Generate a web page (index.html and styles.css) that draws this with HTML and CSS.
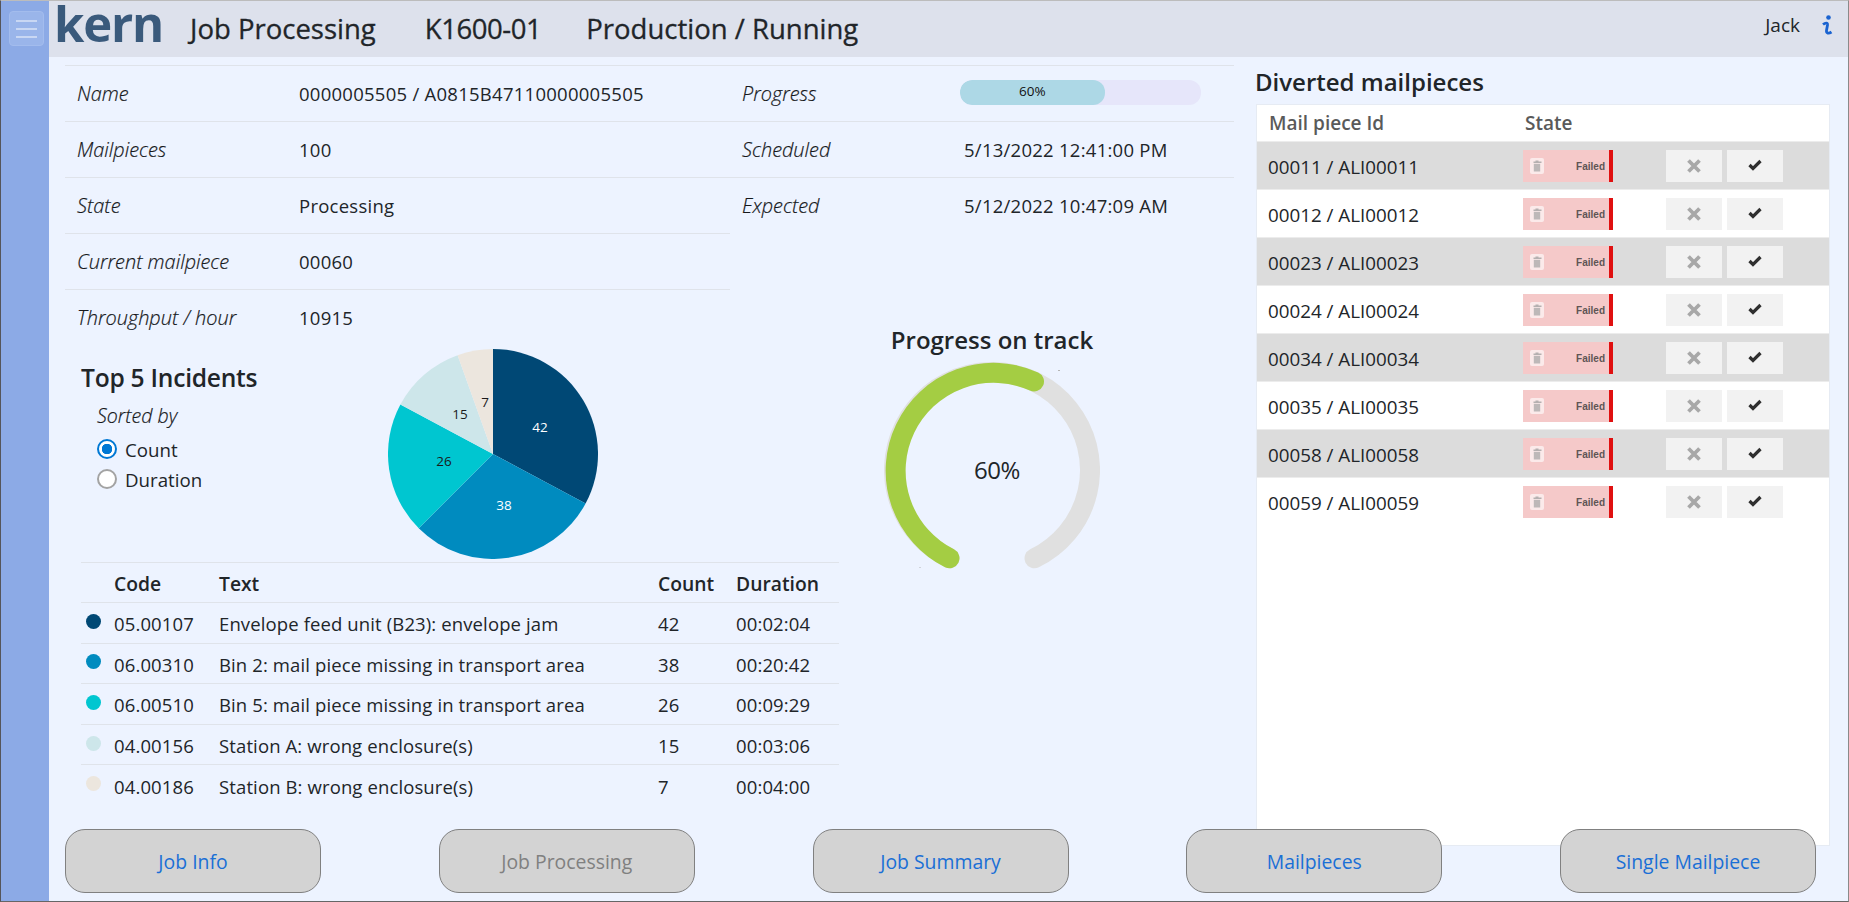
FILE: index.html
```html
<!DOCTYPE html>
<html lang="en">
<head>
<meta charset="utf-8">
<title>Job Processing</title>
<link rel="stylesheet" href="styles.css">
</head>
<body>
<svg class="defs" width="0" height="0" aria-hidden="true">
  <symbol id="trash" viewBox="0 0 14 16">
    <rect width="14" height="16" rx="2" fill="#fbeaea"/>
    <path d="M5.5 2.5h3v1h3v1.4h-8V3.500h2z" fill="#b5b0b0"/>
    <path d="M3.800 5.800h6.400v7.700H3.800z" fill="#bdb8b8"/>
  </symbol>
  <symbol id="cross" viewBox="0 0 14 14">
    <path d="M1.500 1.500l11 11M12.500 1.500l-11 11" stroke="#a8a8a8" stroke-width="3.800" fill="none"/>
  </symbol>
  <symbol id="check" viewBox="0 0 14 12">
    <path d="M1.500 6l3.500 3.500L12.500 2" stroke="#2f2f2f" stroke-width="3.200" fill="none"/>
  </symbol>
</svg>
<div class="app">
  <aside class="side">
    <button class="burger" type="button" aria-label="Menu"><i></i><i></i><i></i></button>
  </aside>
  <div class="main">
    <header class="top">
      <span class="logo">kern</span>
      <h1 class="crumbs"><span>Job Processing</span><span class="crumb-id">K1600-01</span><span>Production / Running</span></h1>
      <div class="user">
        <span class="user-name">Jack</span>
        <svg class="info" width="11" height="21" viewBox="0 0 11 21"><circle cx="6.500" cy="2.500" r="2.300" fill="#1a63d0"/><path d="M1 9.500C3.500 7.500 5.800 7.500 5.500 10L4.500 15.500C4.200 18.500 6.500 19 9.500 17" fill="none" stroke="#1a63d0" stroke-width="2.800"/></svg>
      </div>
    </header>
    <div class="content">
      <section class="board">
        <div class="facts facts-a">
          <div class="fact"><span class="key">Name</span><span class="val">0000005505 / A0815B47110000005505</span></div>
          <div class="fact"><span class="key">Mailpieces</span><span class="val">100</span></div>
          <div class="fact"><span class="key">State</span><span class="val">Processing</span></div>
          <div class="fact"><span class="key">Current mailpiece</span><span class="val">00060</span></div>
          <div class="fact"><span class="key">Throughput / hour</span><span class="val">10915</span></div>
        </div>
        <div class="facts facts-b">
          <div class="fact"><span class="key">Progress</span><div class="bar"><div class="bar-fill" style="width:60%">60%</div></div></div>
          <div class="fact"><span class="key">Scheduled</span><span class="val">5/13/2022 12:41:00 PM</span></div>
          <div class="fact"><span class="key">Expected</span><span class="val">5/12/2022 10:47:09 AM</span></div>
        </div>
        <div class="gauge">
          <h2 class="gauge-title">Progress on track</h2>
          <svg class="gauge-svg" width="216" height="216" viewBox="0 0 216 216">
            <path d="M65.500 196.300A98 98 0 1 1 150.500 196.300" fill="none" stroke="#e0e0e0" stroke-width="20" stroke-linecap="round"/>
            <path d="M65.500 196.300A98 98 0 0 1 150 19.500" fill="none" stroke="#a4cd43" stroke-width="20" stroke-linecap="round"/>
            <path d="M174 8.500h2M35.500 205l1 1" stroke="#b5b5b5" stroke-width="1"/>
            <text class="gauge-num" x="113" y="117" text-anchor="middle">60%</text>
          </svg>
        </div>
        <div class="incidents">
          <div class="inc-head">
            <div class="inc-ctrl">
              <h2 class="inc-title">Top 5 Incidents</h2>
              <div class="sort">
                <div class="sort-label">Sorted by</div>
                <label class="radio"><span class="dot-radio on"></span>Count</label>
                <label class="radio"><span class="dot-radio"></span>Duration</label>
              </div>
            </div>
            <svg class="pie" width="210" height="210" viewBox="0 0 210 210">
              <path d="M105 105V0A105 105 0 0 1 197.600 154.500Z" fill="#004875"/>
              <path d="M105 105L197.600 154.500A105 105 0 0 1 30.750 179.250Z" fill="#008bbf"/>
              <path d="M105 105L30.750 179.250A105 105 0 0 1 12.400 55.500Z" fill="#00c6d0"/>
              <path d="M105 105L12.400 55.500A105 105 0 0 1 69.600 6.140Z" fill="#cde6ea"/>
              <path d="M105 105L69.600 6.140A105 105 0 0 1 105 0Z" fill="#ece6de"/>
              <text class="pie-num light" x="152" y="83">42</text>
              <text class="pie-num light" x="116" y="161">38</text>
              <text class="pie-num" x="56" y="117">26</text>
              <text class="pie-num" x="72" y="70">15</text>
              <text class="pie-num" x="97" y="58">7</text>
            </svg>
          </div>
          <table class="inc-table">
            <colgroup><col class="c-dot"><col class="c-code"><col class="c-text"><col class="c-count"><col class="c-dur"></colgroup>
            <thead><tr><th></th><th>Code</th><th>Text</th><th>Count</th><th>Duration</th></tr></thead>
            <tbody>
              <tr><td><i class="dot d1"></i></td><td>05.00107</td><td>Envelope feed unit (B23): envelope jam</td><td>42</td><td>00:02:04</td></tr>
              <tr><td><i class="dot d2"></i></td><td>06.00310</td><td>Bin 2: mail piece missing in transport area</td><td>38</td><td>00:20:42</td></tr>
              <tr><td><i class="dot d3"></i></td><td>06.00510</td><td>Bin 5: mail piece missing in transport area</td><td>26</td><td>00:09:29</td></tr>
              <tr><td><i class="dot d4"></i></td><td>04.00156</td><td>Station A: wrong enclosure(s)</td><td>15</td><td>00:03:06</td></tr>
              <tr><td><i class="dot d5"></i></td><td>04.00186</td><td>Station B: wrong enclosure(s)</td><td>7</td><td>00:04:00</td></tr>
            </tbody>
          </table>
        </div>
      </section>
      <section class="diverted">
        <h2 class="div-title">Diverted mailpieces</h2>
        <div class="panel">
          <div class="p-head"><span class="p-id">Mail piece Id</span><span>State</span></div>
          <div class="p-row"><span class="p-id">00011 / ALI00011</span><div class="badge"><svg class="b-icon" width="14" height="16"><use href="#trash"/></svg><span>Failed</span></div><div class="acts"><button class="act" type="button"><svg width="14" height="14"><use href="#cross"/></svg></button><button class="act" type="button"><svg class="chk" width="14" height="12"><use href="#check"/></svg></button></div></div>
          <div class="p-row"><span class="p-id">00012 / ALI00012</span><div class="badge"><svg class="b-icon" width="14" height="16"><use href="#trash"/></svg><span>Failed</span></div><div class="acts"><button class="act" type="button"><svg width="14" height="14"><use href="#cross"/></svg></button><button class="act" type="button"><svg class="chk" width="14" height="12"><use href="#check"/></svg></button></div></div>
          <div class="p-row"><span class="p-id">00023 / ALI00023</span><div class="badge"><svg class="b-icon" width="14" height="16"><use href="#trash"/></svg><span>Failed</span></div><div class="acts"><button class="act" type="button"><svg width="14" height="14"><use href="#cross"/></svg></button><button class="act" type="button"><svg class="chk" width="14" height="12"><use href="#check"/></svg></button></div></div>
          <div class="p-row"><span class="p-id">00024 / ALI00024</span><div class="badge"><svg class="b-icon" width="14" height="16"><use href="#trash"/></svg><span>Failed</span></div><div class="acts"><button class="act" type="button"><svg width="14" height="14"><use href="#cross"/></svg></button><button class="act" type="button"><svg class="chk" width="14" height="12"><use href="#check"/></svg></button></div></div>
          <div class="p-row"><span class="p-id">00034 / ALI00034</span><div class="badge"><svg class="b-icon" width="14" height="16"><use href="#trash"/></svg><span>Failed</span></div><div class="acts"><button class="act" type="button"><svg width="14" height="14"><use href="#cross"/></svg></button><button class="act" type="button"><svg class="chk" width="14" height="12"><use href="#check"/></svg></button></div></div>
          <div class="p-row"><span class="p-id">00035 / ALI00035</span><div class="badge"><svg class="b-icon" width="14" height="16"><use href="#trash"/></svg><span>Failed</span></div><div class="acts"><button class="act" type="button"><svg width="14" height="14"><use href="#cross"/></svg></button><button class="act" type="button"><svg class="chk" width="14" height="12"><use href="#check"/></svg></button></div></div>
          <div class="p-row"><span class="p-id">00058 / ALI00058</span><div class="badge"><svg class="b-icon" width="14" height="16"><use href="#trash"/></svg><span>Failed</span></div><div class="acts"><button class="act" type="button"><svg width="14" height="14"><use href="#cross"/></svg></button><button class="act" type="button"><svg class="chk" width="14" height="12"><use href="#check"/></svg></button></div></div>
          <div class="p-row"><span class="p-id">00059 / ALI00059</span><div class="badge"><svg class="b-icon" width="14" height="16"><use href="#trash"/></svg><span>Failed</span></div><div class="acts"><button class="act" type="button"><svg width="14" height="14"><use href="#cross"/></svg></button><button class="act" type="button"><svg class="chk" width="14" height="12"><use href="#check"/></svg></button></div></div>
        </div>
      </section>
    </div>
    <nav class="nav">
      <button class="nav-btn" type="button">Job Info</button>
      <button class="nav-btn off" type="button">Job Processing</button>
      <button class="nav-btn" type="button">Job Summary</button>
      <button class="nav-btn" type="button">Mailpieces</button>
      <button class="nav-btn" type="button">Single Mailpiece</button>
    </nav>
  </div>
</div>
</body>
</html>
```
FILE: styles.css
```css
* { box-sizing: border-box; }
html, body { margin: 0; height: 100%; overflow: hidden; }
body {
  font-family: "Open Sans", "Liberation Sans", sans-serif;
  font-size: 18.500px;
  color: #212529;
  background: #edf3ff;
}
h1, h2 { margin: 0; font-weight: 600; }
.defs { position: absolute; }

.app {
  display: flex;
  height: 100vh;
  border: 1px solid #8a8a8a;
  border-top-color: #bcbcbc;
  border-left-color: #55555a;
  border-bottom-color: #666;
}
.side { width: 48px; flex: none; background: #8caae6; padding: 10px 0 0 8px; }
.burger {
  display: flex; flex-direction: column; justify-content: center; gap: 6px;
  width: 35px; height: 35px; padding: 0 6px;
  background: #9ab5ea; border: 1px solid #a3bced; border-radius: 4px;
}
.burger i { display: block; height: 2px; background: #c9d7f3; }

.main { flex: 1; min-width: 0; display: flex; flex-direction: column; }
.top {
  height: 56px; flex: none;
  display: flex; align-items: center;
  padding: 0 15px 0 5px;
  background: #dde1ec;
}
.logo {
  align-self: flex-start;
  width: 136px;
  font-weight: 700; font-size: 49px; line-height: 44px; letter-spacing: -1.200px;
  color: #3a5a7c;
}
.crumbs { display: flex; gap: 49px; font-size: 27.500px; font-weight: 400; line-height: 36px; -webkit-text-stroke: .3px currentColor; }
.crumb-id { letter-spacing: -.45px; margin-right: -4px; }
.user { margin-left: auto; display: flex; align-items: center; gap: 22px; margin-top: -8px; }
.user-name { font-size: 19px; }

.content { flex: 1; min-height: 0; display: flex; gap: 22px; padding: 8px 18px 0 16px; }
.board {
  width: 1169px; flex: none;
  display: grid;
  grid-template-columns: 665px 109px 395px;
  grid-template-rows: 168px 112px 1fr;
}
.facts-a { grid-column: 1; grid-row: 1 / 3; }
.facts-b { grid-column: 2 / 4; grid-row: 1; }
.fact {
  height: 56px; display: flex; align-items: center;
  border-top: 1px solid #dfe3ea;
  padding-left: 12px;
}
.key { width: 222px; flex: none; font-style: italic; font-weight: 300; font-size: 19.900px; color: #16181b; -webkit-text-stroke: .2px currentColor; }
.val { letter-spacing: .26px; }
.bar { width: 241px; height: 25px; margin: -3px 0 0 -4px; background: #e6e6fa; border-radius: 12px; overflow: hidden; }
.bar-fill { height: 100%; background: #add8e6; border-radius: 12px; font-size: 13.500px; line-height: 22px; text-align: center; color: #111; }

.gauge { grid-column: 3; grid-row: 2 / 4; padding: 89px 89px 0 0; display: flex; flex-direction: column; align-items: center; }
.gauge-title { font-size: 24px; line-height: 36px; white-space: nowrap; }
.gauge-svg { margin-top: 4px; display: block; flex: none; }
.gauge-num { font-size: 24px; fill: #212529; letter-spacing: -.4px; }

.incidents { grid-column: 1 / 3; grid-row: 3; padding-left: 16px; }
.inc-head { display: flex; height: 217px; padding-top: 4px; }
.inc-ctrl { width: 307px; flex: none; }
.inc-title { font-size: 24.600px; line-height: 32px; margin-top: 13px; letter-spacing: -.25px; }
.sort { padding: 8px 0 0 16px; }
.sort-label { font-style: italic; font-weight: 300; font-size: 19.600px; line-height: 28px; margin-bottom: 4px; color: #16181b; -webkit-text-stroke: .2px currentColor; }
.radio { display: flex; align-items: center; gap: 8px; height: 30px; font-size: 18.700px; }
.dot-radio { width: 20px; height: 20px; border-radius: 50%; border: 2px solid #a3a3a3; background: #fff; flex: none; }
.dot-radio.on { border: 2px solid #0078d4; background: radial-gradient(circle, #0078d4 0 5px, #fff 5.500px); }
.pie { display: block; flex: none; }
.pie-num { font-size: 13.500px; fill: #1a1a1a; text-anchor: middle; }
.pie-num.light { fill: #fff; }

.inc-table { width: 758px; table-layout: fixed; border-collapse: collapse; }
.c-dot { width: 33px; }
.c-code { width: 105px; }
.c-text { width: 439px; }
.c-count { width: 78px; }
.c-dur { width: 103px; }
.inc-table th { height: 40px; text-align: left; font-size: 19.300px; font-weight: 600; padding: 2px 0 0; border-top: 1px solid #dfe3ea; }
.inc-table td { height: 40.600px; padding: 2px 0 0; border-top: 1px solid #dfe3ea; white-space: nowrap; letter-spacing: .12px; }
.dot { display: block; width: 15px; height: 15px; border-radius: 50%; margin: -5px 0 0 5px; }
.d1 { background: #004875; }
.d2 { background: #008bbf; }
.d3 { background: #00c6d0; }
.d4 { background: #cde6ea; }
.d5 { background: #ece6de; }

.diverted { flex: 1; min-width: 0; display: flex; flex-direction: column; }
.div-title { font-size: 24px; line-height: 34px; margin: 0 0 5px -1px; white-space: nowrap; }
.panel { flex: 1; background: #fff; border: 1px solid #e6ebf3; }
.p-head {
  display: flex; align-items: center; height: 36px;
  font-weight: 600; font-size: 19px; color: #5a5a5a;
}
.p-id { width: 268px; flex: none; padding-left: 12px; }
.p-row {
  display: flex; align-items: center; height: 48px;
  border-top: 1px solid #ececec;
  font-size: 18.800px;
}
.p-row:nth-child(even) { background: #dcdcdc; }
.p-row .p-id { padding: 2px 0 0 11px; width: 266px; }
.badge {
  width: 90px; height: 32px; flex: none;
  display: flex; align-items: center; justify-content: space-between;
  padding: 0 4px 0 7px; margin-top: 1px;
  background: #f5c9c9; border-right: 4px solid #e01010;
  font-family: "Liberation Sans", sans-serif;
  font-size: 10px; font-weight: 700; color: #5e5555;
}
.b-icon { display: block; }
.acts { display: flex; gap: 5px; margin: 1px 0 0 53px; }
.act {
  width: 56px; height: 32px; padding: 0;
  display: flex; align-items: center; justify-content: center;
  background: #f2f2f2; border: 0;
}
.chk { margin-top: -3px; }

.nav {
  flex: none; z-index: 1;
  display: flex; justify-content: space-between;
  margin-top: -17px;
  padding: 0 32px 8px 16px;
}
.nav-btn {
  width: 256px; height: 64px;
  background: #d3d3d3; border: 1px solid #808080; border-radius: 20px;
  font: 19.400px "Open Sans", sans-serif; color: #1a6fd6;
}
.nav-btn.off { color: #808080; }
```
